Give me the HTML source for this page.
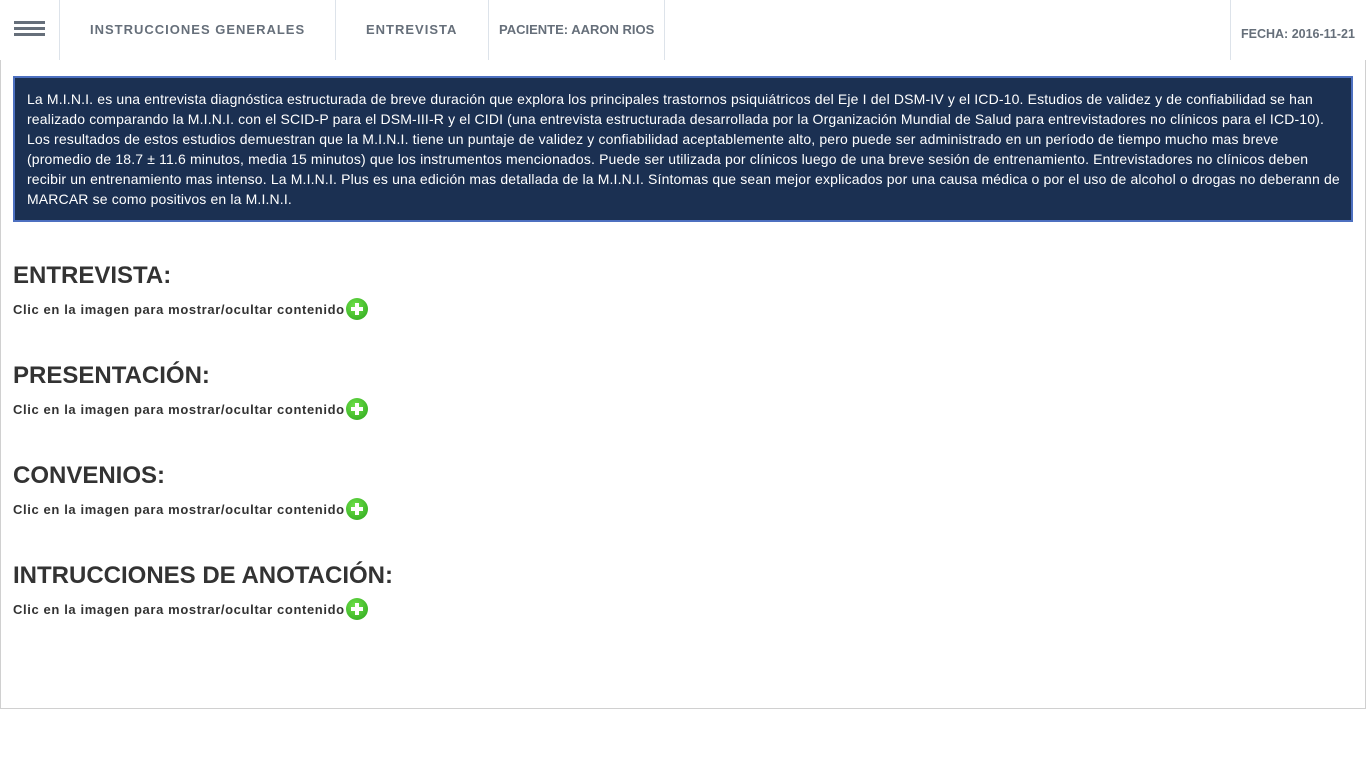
<!DOCTYPE html>
<html><head><meta charset="utf-8"><style>
body{margin:0;width:1366px;height:768px;background:#fff;font-family:"Liberation Sans",Arial,sans-serif;position:relative;overflow:hidden}
.nav{position:absolute;top:0;left:0;width:1366px;height:60px}
.d{position:absolute;top:0;height:60px;border-left:1px solid #dde3ea}
.n{position:absolute;font-weight:bold;color:#666f7a;font-size:13px}
.page{position:absolute;left:0;top:60px;width:1364px;height:648px;border:1px solid #d0d0d0;border-top:none}
.info{position:absolute;left:13px;top:76px;width:1312px;height:122px;background:#1b3052;border:2px solid #4d70c0;color:#fff;font-size:14px;line-height:20px;padding:11px 12px 9px 12px;letter-spacing:0.15px;white-space:nowrap;overflow:hidden}
h2{position:absolute;left:13px;margin:0;font-size:24px;color:#333;font-weight:bold}
.c{position:absolute;left:13px;font-size:13px;font-weight:bold;color:#333;display:flex;align-items:center;letter-spacing:0.62px}
.ic{width:22px;height:22px;border-radius:50%;background:radial-gradient(circle at 40% 35%,#6fe04a,#2aa51b);position:relative;margin-left:1px}
.ic:before{content:"";position:absolute;left:5px;top:9px;width:12px;height:4px;background:#fff}
.ic:after{content:"";position:absolute;left:9px;top:5px;width:4px;height:12px;background:#fff}
</style></head><body>
<div class="nav">
<div style="position:absolute;left:14px;top:21px;width:31px;height:3px;background:#666f7a"></div>
<div style="position:absolute;left:14px;top:27px;width:31px;height:3px;background:#666f7a"></div>
<div style="position:absolute;left:14px;top:33px;width:31px;height:3px;background:#666f7a"></div>
<div class="d" style="left:59px"></div><div class="d" style="left:335px"></div><div class="d" style="left:488px"></div><div class="d" style="left:664px"></div><div class="d" style="left:1230px"></div>
<div class="n" style="left:90px;top:22px;letter-spacing:1px">INSTRUCCIONES GENERALES</div>
<div class="n" style="left:366px;top:22px;letter-spacing:1px">ENTREVISTA</div>
<div class="n" style="left:499px;top:22px;font-size:13px">PACIENTE: AARON RIOS</div>
<div class="n" style="left:1241px;top:27px;font-size:12.5px">FECHA: 2016-11-21</div>
</div>
<div class="page"></div>
<div class="info">La M.I.N.I. es una entrevista diagnóstica estructurada de breve duración que explora los principales trastornos psiquiátricos del Eje I del DSM-IV y el ICD-10. Estudios de validez y de confiabilidad se han<br>realizado comparando la M.I.N.I. con el SCID-P para el DSM-III-R y el CIDI (una entrevista estructurada desarrollada por la Organización Mundial de Salud para entrevistadores no clínicos para el ICD-10).<br>Los resultados de estos estudios demuestran que la M.I.N.I. tiene un puntaje de validez y confiabilidad aceptablemente alto, pero puede ser administrado en un período de tiempo mucho mas breve<br>(promedio de 18.7 ± 11.6 minutos, media 15 minutos) que los instrumentos mencionados. Puede ser utilizada por clínicos luego de una breve sesión de entrenamiento. Entrevistadores no clínicos deben<br>recibir un entrenamiento mas intenso. La M.I.N.I. Plus es una edición mas detallada de la M.I.N.I. Síntomas que sean mejor explicados por una causa médica o por el uso de alcohol o drogas no deberann de<br>MARCAR se como positivos en la M.I.N.I.</div>
<h2 style="top:262px">ENTREVISTA:</h2><div class="c" style="top:298px">Clic en la imagen para mostrar/ocultar contenido<span class="ic"></span></div>
<h2 style="top:362px">PRESENTACIÓN:</h2><div class="c" style="top:398px">Clic en la imagen para mostrar/ocultar contenido<span class="ic"></span></div>
<h2 style="top:462px">CONVENIOS:</h2><div class="c" style="top:498px">Clic en la imagen para mostrar/ocultar contenido<span class="ic"></span></div>
<h2 style="top:562px">INTRUCCIONES DE ANOTACIÓN:</h2><div class="c" style="top:598px">Clic en la imagen para mostrar/ocultar contenido<span class="ic"></span></div>
</body></html>
